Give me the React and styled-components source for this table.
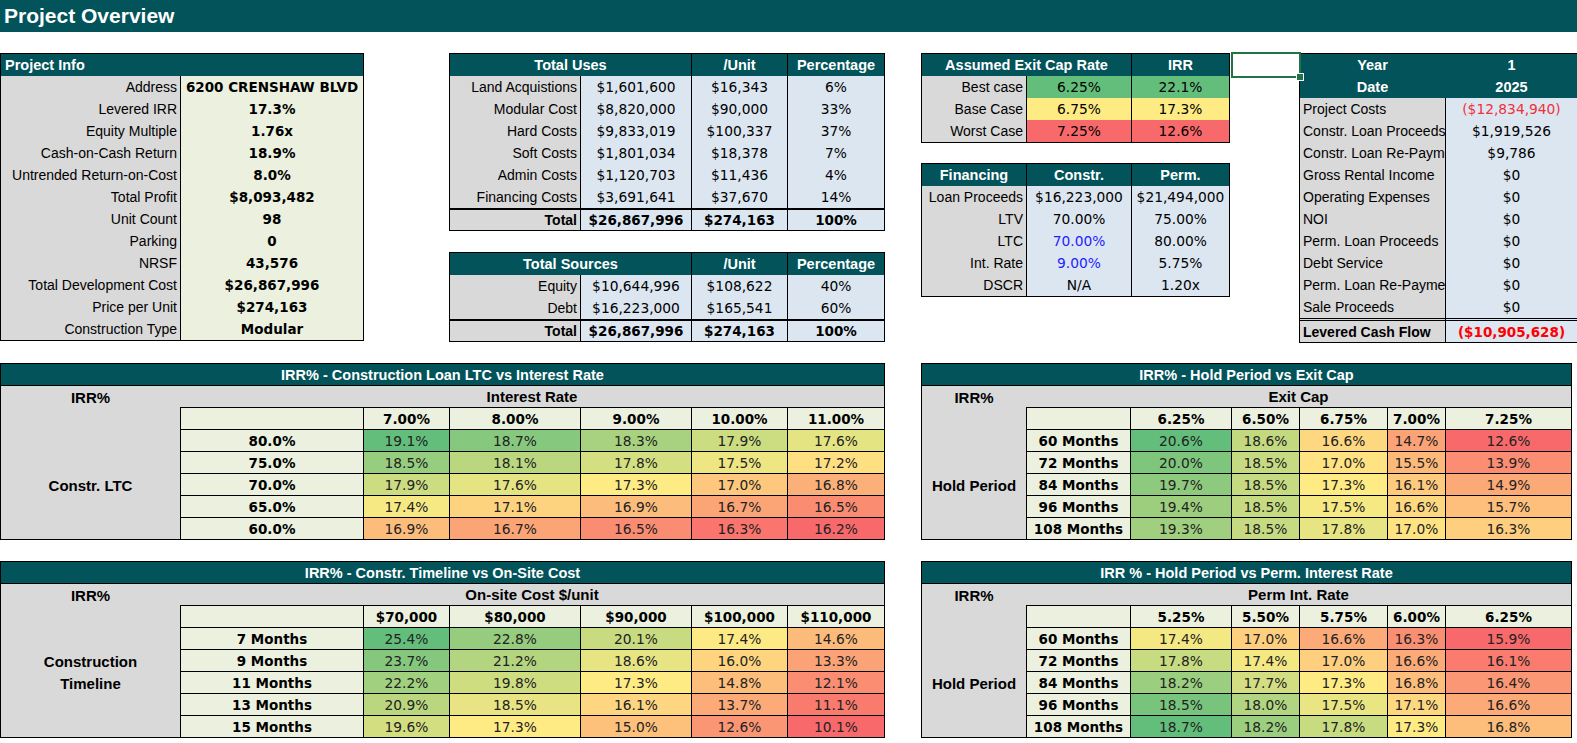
import React from 'react';
import styled, { createGlobalStyle } from 'styled-components';

const TEAL = '#02535a';
const GRAY = '#d9d9d9';
const GREEN = '#ebf1de';
const BLUE = '#dce6f1';
const LABEL = '"Liberation Sans", Arial, sans-serif';
const NUM = '"DejaVu Sans", Verdana, sans-serif';

const GlobalStyle = createGlobalStyle`
  html, body {
    margin: 0;
    padding: 0;
    background: #fff;
    overflow: hidden;
  }
  * {
    box-sizing: border-box;
  }
`;

const Page = styled.div`
  width: 1577px;
  height: 743px;
  overflow: hidden;
  font-family: ${LABEL};
  color: #000;
`;

const TitleBar = styled.div`
  height: 32px;
  background: ${TEAL};
  color: #fff;
  font: 700 21px ${LABEL};
  line-height: 32px;
  padding-left: 4px;
`;

const TopGrid = styled.div`
  display: grid;
  grid-template-columns: 364px 85px 436px 36px 309px 69px 279px;
  align-items: start;
  margin-top: 21px;
`;

const Slot = styled.div`
  grid-column: ${p => p.$col};
  display: flex;
  flex-direction: column;
  gap: ${p => p.$gap || 0}px;
  min-width: 0;
`;

const Sheet = styled.div`
  display: grid;
  grid-template-columns: ${p => p.$cols};
  grid-template-rows: ${p => p.$rows || 'none'};
  grid-auto-rows: 22px;
  column-gap: 1px;
  background: #000;
  border: 1px solid #000;
`;

const justify = a => (a === 'left' ? 'flex-start' : a === 'right' ? 'flex-end' : 'center');

const Cell = styled.div`
  grid-column: span ${p => p.$span || 1};
  display: flex;
  align-items: center;
  justify-content: ${p => justify(p.$align)};
  padding: 0 3px;
  background: ${p => p.$bg || GRAY};
  color: ${p => p.$color || '#000'};
  font-family: ${p => (p.$num ? NUM : LABEL)};
  font-size: ${p => (p.$num ? (p.$bold ? '13.5px' : '13.8px') : '14px')};
  font-weight: ${p => (p.$bold ? 700 : 400)};
  white-space: nowrap;
  overflow: hidden;
  border-top: ${p => (p.$rule === 'thick' ? '2px solid #000' : p.$rule === 'double' ? '3px double #000' : '0')};
`;

const Head = styled.div`
  grid-column: span ${p => p.$span || 1};
  display: flex;
  align-items: center;
  justify-content: ${p => justify(p.$align)};
  padding: 0 4px;
  background: ${TEAL};
  color: #fff;
  font: 700 14.5px ${LABEL};
  white-space: nowrap;
`;

const HeadBlock = styled.div`
  grid-column: 1 / -1;
  display: grid;
  grid-template-columns: ${p => p.$cols};
  grid-auto-rows: 22px;
  column-gap: 1px;
  background: ${TEAL};
`;

const Selected = styled.div`
  position: relative;
  z-index: 2;
  width: 70px;
  height: 26px;
  margin: -1px 0 0 1px;
  border: 2px solid #217346;
  background: #fff;
  &::after {
    content: '';
    position: absolute;
    right: -5px;
    bottom: -5px;
    width: 6px;
    height: 6px;
    background: #217346;
    border: 1px solid #fff;
  }
`;

const BottomGrid = styled.div`
  display: grid;
  grid-template-columns: 885px 651px;
  column-gap: 36px;
  align-items: start;
  margin-top: ${p => p.$top}px;
`;

const Heat = styled.div`
  border: 1px solid #000;
  background: ${GRAY};
`;

const HeatTitle = styled.div`
  height: 22px;
  border-bottom: 1px solid #000;
  background: ${TEAL};
  color: #fff;
  font: 700 14.5px ${LABEL};
  display: flex;
  align-items: center;
  justify-content: center;
`;

const HeatBody = styled.div`
  display: grid;
  grid-template-columns: ${p => p.$side}px 1fr;
`;

const SideCol = styled.div`
  display: grid;
  grid-template-rows: repeat(6, 22px) 21px;
`;

const SideLabel = styled.div`
  grid-row: ${p => p.$row};
  display: flex;
  align-items: center;
  justify-content: center;
  font: 700 15px ${LABEL};
`;

const AxisLabel = styled.div`
  height: 21px;
  display: flex;
  align-items: center;
  justify-content: center;
  font: 700 15px ${LABEL};
`;

const Matrix = styled.div`
  display: grid;
  grid-template-columns: ${p => p.$cols};
  grid-auto-rows: 21px;
  gap: 1px;
  background: #000;
  border-top: 1px solid #000;
  border-left: 1px solid #000;
`;

const MCell = styled.div`
  display: flex;
  align-items: center;
  justify-content: center;
  background: ${p => p.$bg || GREEN};
  color: ${p => (p.$bold ? '#000' : '#222')};
  font-family: ${NUM};
  font-size: ${p => (p.$bold ? '13.5px' : '13.8px')};
  font-weight: ${p => (p.$bold ? 700 : 400)};
  white-space: nowrap;
`;

const RED = [248, 105, 107];
const YEL = [255, 235, 132];
const GRN = [99, 190, 123];

const mix = (a, b, t) =>
  `rgb(${a.map((c, i) => Math.round(c + (b[i] - c) * t)).join(',')})`;

function colorScale(rows) {
  const all = rows.flat().sort((a, b) => a - b);
  const min = all[0];
  const max = all[all.length - 1];
  const mid = all[(all.length - 1) / 2];
  return v =>
    v <= mid
      ? mix(RED, YEL, mid === min ? 1 : (v - min) / (mid - min))
      : mix(YEL, GRN, (v - mid) / (max - mid));
}

const projectInfo = [
  ['Address', '6200 CRENSHAW BLVD'],
  ['Levered IRR', '17.3%'],
  ['Equity Multiple', '1.76x'],
  ['Cash-on-Cash Return', '18.9%'],
  ['Untrended Return-on-Cost', '8.0%'],
  ['Total Profit', '$8,093,482'],
  ['Unit Count', '98'],
  ['Parking', '0'],
  ['NRSF', '43,576'],
  ['Total Development Cost', '$26,867,996'],
  ['Price per Unit', '$274,163'],
  ['Construction Type', 'Modular'],
];

const uses = [
  ['Land Acquistions', '$1,601,600', '$16,343', '6%'],
  ['Modular Cost', '$8,820,000', '$90,000', '33%'],
  ['Hard Costs', '$9,833,019', '$100,337', '37%'],
  ['Soft Costs', '$1,801,034', '$18,378', '7%'],
  ['Admin Costs', '$1,120,703', '$11,436', '4%'],
  ['Financing Costs', '$3,691,641', '$37,670', '14%'],
];

const sources = [
  ['Equity', '$10,644,996', '$108,622', '40%'],
  ['Debt', '$16,223,000', '$165,541', '60%'],
];

const exitCases = [
  ['Best case', '6.25%', '22.1%', '#63be7b'],
  ['Base Case', '6.75%', '17.3%', '#ffeb84'],
  ['Worst Case', '7.25%', '12.6%', '#f8696b'],
];

const financing = [
  ['Loan Proceeds', '$16,223,000', '$21,494,000'],
  ['LTV', '70.00%', '75.00%'],
  ['LTC', '70.00%', '80.00%', true],
  ['Int. Rate', '9.00%', '5.75%', true],
  ['DSCR', 'N/A', '1.20x'],
];

const cashFlow = [
  ['Project Costs', '($12,834,940)', '#f0303a'],
  ['Constr. Loan Proceeds', '$1,919,526'],
  ['Constr. Loan Re-Payment', '$9,786'],
  ['Gross Rental Income', '$0'],
  ['Operating Expenses', '$0'],
  ['NOI', '$0'],
  ['Perm. Loan Proceeds', '$0'],
  ['Debt Service', '$0'],
  ['Perm. Loan Re-Payment', '$0'],
  ['Sale Proceeds', '$0'],
];

const LEFT_COLS = '182px 85px 130px 110px 95px 96px';
const RIGHT_COLS = '103px 100px 67px 87px 57px 125px';

const sensitivities = [
  [
    {
      title: 'IRR% - Construction Loan LTC vs Interest Rate',
      axis: 'Interest Rate',
      side: 179,
      cols: LEFT_COLS,
      labels: [[5, 'Constr. LTC']],
      colHeads: ['7.00%', '8.00%', '9.00%', '10.00%', '11.00%'],
      rowHeads: ['80.0%', '75.0%', '70.0%', '65.0%', '60.0%'],
      values: [
        [19.1, 18.7, 18.3, 17.9, 17.6],
        [18.5, 18.1, 17.8, 17.5, 17.2],
        [17.9, 17.6, 17.3, 17.0, 16.8],
        [17.4, 17.1, 16.9, 16.7, 16.5],
        [16.9, 16.7, 16.5, 16.3, 16.2],
      ],
    },
    {
      title: 'IRR% - Hold Period vs Exit Cap',
      axis: 'Exit Cap',
      side: 104,
      cols: RIGHT_COLS,
      labels: [[5, 'Hold Period']],
      colHeads: ['6.25%', '6.50%', '6.75%', '7.00%', '7.25%'],
      rowHeads: ['60 Months', '72 Months', '84 Months', '96 Months', '108 Months'],
      values: [
        [20.6, 18.6, 16.6, 14.7, 12.6],
        [20.0, 18.5, 17.0, 15.5, 13.9],
        [19.7, 18.5, 17.3, 16.1, 14.9],
        [19.4, 18.5, 17.5, 16.6, 15.7],
        [19.3, 18.5, 17.8, 17.0, 16.3],
      ],
    },
  ],
  [
    {
      title: 'IRR% - Constr. Timeline vs On-Site Cost',
      axis: 'On-site Cost $/unit',
      side: 179,
      cols: LEFT_COLS,
      labels: [[4, 'Construction'], [5, 'Timeline']],
      colHeads: ['$70,000', '$80,000', '$90,000', '$100,000', '$110,000'],
      rowHeads: ['7 Months', '9 Months', '11 Months', '13 Months', '15 Months'],
      values: [
        [25.4, 22.8, 20.1, 17.4, 14.6],
        [23.7, 21.2, 18.6, 16.0, 13.3],
        [22.2, 19.8, 17.3, 14.8, 12.1],
        [20.9, 18.5, 16.1, 13.7, 11.1],
        [19.6, 17.3, 15.0, 12.6, 10.1],
      ],
    },
    {
      title: 'IRR % - Hold Period vs Perm. Interest Rate',
      axis: 'Perm Int. Rate',
      side: 104,
      cols: RIGHT_COLS,
      labels: [[5, 'Hold Period']],
      colHeads: ['5.25%', '5.50%', '5.75%', '6.00%', '6.25%'],
      rowHeads: ['60 Months', '72 Months', '84 Months', '96 Months', '108 Months'],
      values: [
        [17.4, 17.0, 16.6, 16.3, 15.9],
        [17.8, 17.4, 17.0, 16.6, 16.1],
        [18.2, 17.7, 17.3, 16.8, 16.4],
        [18.5, 18.0, 17.5, 17.1, 16.6],
        [18.7, 18.2, 17.8, 17.3, 16.8],
      ],
    },
  ],
];

function CostTable({ title, rows, total }) {
  return (
    <Sheet $cols="130px 110px 95px 96px">
      <Head $span={2}>{title}</Head>
      <Head>/Unit</Head>
      <Head>Percentage</Head>
      {rows.map(([label, amount, unit, pct]) => (
        <React.Fragment key={label}>
          <Cell $align="right">{label}</Cell>
          <Cell $bg={BLUE} $num>{amount}</Cell>
          <Cell $bg={BLUE} $num>{unit}</Cell>
          <Cell $bg={BLUE} $num>{pct}</Cell>
        </React.Fragment>
      ))}
      <Cell $align="right" $bold $rule="thick">Total</Cell>
      {total.map(v => (
        <Cell key={v} $bg={BLUE} $num $bold $rule="thick">{v}</Cell>
      ))}
    </Sheet>
  );
}

function Sensitivity({ table }) {
  const color = colorScale(table.values);
  return (
    <Heat>
      <HeatTitle>{table.title}</HeatTitle>
      <HeatBody $side={table.side}>
        <SideCol>
          <SideLabel $row={1}>IRR%</SideLabel>
          {table.labels.map(([row, text]) => (
            <SideLabel key={text} $row={row}>{text}</SideLabel>
          ))}
        </SideCol>
        <div>
          <AxisLabel>{table.axis}</AxisLabel>
          <Matrix $cols={table.cols}>
            <MCell />
            {table.colHeads.map(h => (
              <MCell key={h} $bold>{h}</MCell>
            ))}
            {table.rowHeads.map((r, i) => (
              <React.Fragment key={r}>
                <MCell $bold>{r}</MCell>
                {table.values[i].map((v, j) => (
                  <MCell key={j} $bg={color(v)}>{v.toFixed(1)}%</MCell>
                ))}
              </React.Fragment>
            ))}
          </Matrix>
        </div>
      </HeatBody>
    </Heat>
  );
}

export default function App() {
  return (
    <Page>
      <GlobalStyle />
      <TitleBar>Project Overview</TitleBar>
      <TopGrid>
        <Slot $col={1}>
          <Sheet $cols="179px 182px">
            <Head $span={2} $align="left">Project Info</Head>
            {projectInfo.map(([label, value]) => (
              <React.Fragment key={label}>
                <Cell $align="right">{label}</Cell>
                <Cell $bg={GREEN} $num $bold>{value}</Cell>
              </React.Fragment>
            ))}
          </Sheet>
        </Slot>

        <Slot $col={3} $gap={21}>
          <CostTable title="Total Uses" rows={uses} total={['$26,867,996', '$274,163', '100%']} />
          <CostTable title="Total Sources" rows={sources} total={['$26,867,996', '$274,163', '100%']} />
        </Slot>

        <Slot $col={5} $gap={20}>
          <Sheet $cols="104px 104px 97px">
            <Head $span={2}>Assumed Exit Cap Rate</Head>
            <Head>IRR</Head>
            {exitCases.map(([label, cap, irr, bg]) => (
              <React.Fragment key={label}>
                <Cell $align="right">{label}</Cell>
                <Cell $bg={bg} $num>{cap}</Cell>
                <Cell $bg={bg} $num>{irr}</Cell>
              </React.Fragment>
            ))}
          </Sheet>
          <Sheet $cols="104px 104px 97px">
            <Head>Financing</Head>
            <Head>Constr.</Head>
            <Head>Perm.</Head>
            {financing.map(([label, constr, perm, input]) => (
              <React.Fragment key={label}>
                <Cell $align="right">{label}</Cell>
                <Cell $bg={BLUE} $num $color={input ? '#1f1fff' : '#000'}>{constr}</Cell>
                <Cell $bg={BLUE} $num>{perm}</Cell>
              </React.Fragment>
            ))}
          </Sheet>
        </Slot>

        <Slot $col={6}>
          <Selected />
        </Slot>

        <Slot $col={7}>
          <Sheet $cols="145px 131px" $rows="44px repeat(10, 22px) 24px">
            <HeadBlock $cols="145px 131px">
              <Head>Year</Head>
              <Head>1</Head>
              <Head>Date</Head>
              <Head>2025</Head>
            </HeadBlock>
            {cashFlow.map(([label, value, color]) => (
              <React.Fragment key={label}>
                <Cell $align="left">{label}</Cell>
                <Cell $bg={BLUE} $num $color={color}>{value}</Cell>
              </React.Fragment>
            ))}
            <Cell $align="left" $bold $rule="double">Levered Cash Flow</Cell>
            <Cell $bg={BLUE} $num $bold $color="#ff0000" $rule="double">($10,905,628)</Cell>
          </Sheet>
        </Slot>
      </TopGrid>

      {sensitivities.map((pair, i) => (
        <BottomGrid key={i} $top={i === 0 ? 20 : 21}>
          {pair.map(t => (
            <Sensitivity key={t.title} table={t} />
          ))}
        </BottomGrid>
      ))}
    </Page>
  );
}
